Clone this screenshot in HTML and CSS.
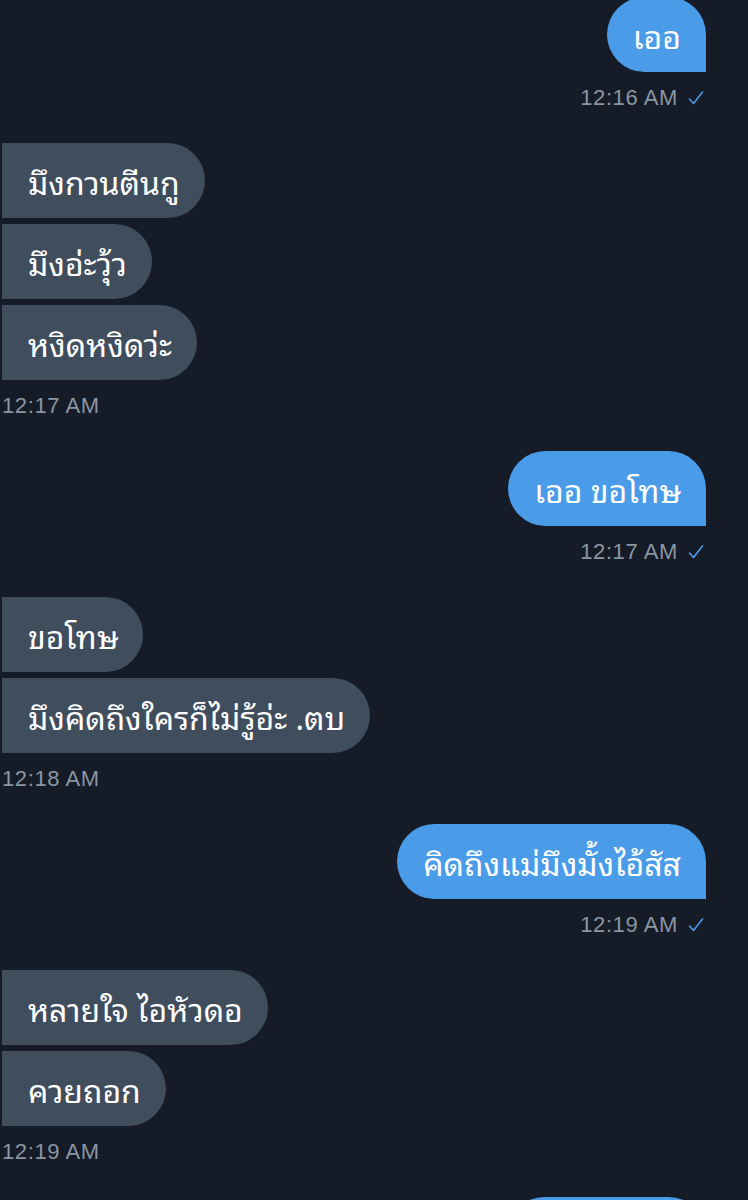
FILE: index.html
```html
<!DOCTYPE html>
<html lang="th">
<head>
<meta charset="utf-8">
<title>Messages</title>
<link rel="stylesheet" href="styles.css">
</head>
<body>
<main class="chat">
  <section class="group out first">
    <div class="bubble">เออ</div>
    <div class="time">12:16 AM <svg class="check" viewBox="0 0 16 16" width="16" height="16"><path d="M1.5 9 L5.5 13.5 L14.5 2" fill="none" stroke="currentColor" stroke-width="1.6" stroke-linecap="round" stroke-linejoin="round"/></svg></div>
  </section>
  <section class="group in">
    <div class="bubble">มึงกวนตีนกู</div>
    <div class="bubble">มึงอ่ะวุ้ว</div>
    <div class="bubble">หงิดหงิดว่ะ</div>
    <div class="time">12:17 AM</div>
  </section>
  <section class="group out">
    <div class="bubble">เออ ขอโทษ</div>
    <div class="time">12:17 AM <svg class="check" viewBox="0 0 16 16" width="16" height="16"><path d="M1.5 9 L5.5 13.5 L14.5 2" fill="none" stroke="currentColor" stroke-width="1.6" stroke-linecap="round" stroke-linejoin="round"/></svg></div>
  </section>
  <section class="group in">
    <div class="bubble">ขอโทษ</div>
    <div class="bubble">มึงคิดถึงใครก็ไม่รู้อ่ะ .ตบ</div>
    <div class="time">12:18 AM</div>
  </section>
  <section class="group out">
    <div class="bubble">คิดถึงแม่มึงมั้งไอ้สัส</div>
    <div class="time">12:19 AM <svg class="check" viewBox="0 0 16 16" width="16" height="16"><path d="M1.5 9 L5.5 13.5 L14.5 2" fill="none" stroke="currentColor" stroke-width="1.6" stroke-linecap="round" stroke-linejoin="round"/></svg></div>
  </section>
  <section class="group in">
    <div class="bubble">หลายใจ ไอหัวดอ</div>
    <div class="bubble">ควยถอก</div>
    <div class="time">12:19 AM</div>
  </section>
  <section class="group out">
    <div class="bubble partial"></div>
  </section>
</main>
</body>
</html>
```

FILE: styles.css
```css
html, body {
  margin: 0;
  padding: 0;
  background: #151c27;
}
body {
  width: 748px;
  height: 1200px;
  overflow: hidden;
}
.chat {
  display: flex;
  flex-direction: column;
  gap: 33px;
  padding: 0 42px 0 2px;
  font-family: "Noto Sans Thai Looped", "Loma", "Garuda", "Norasi", "Sarabun", "Noto Sans Thai", "Noto Sans", sans-serif;
}
.group {
  display: flex;
  flex-direction: column;
  gap: 6px;
}
.group.first {
  margin-top: -3px;
}
.group.out {
  align-items: flex-end;
}
.group.in {
  align-items: flex-start;
}
.bubble {
  box-sizing: border-box;
  height: 75px;
  display: flex;
  align-items: center;
  padding: 0 25px 0 26px;
  font-size: 32px;
  color: #ffffff;
  white-space: nowrap;
}
.out .bubble {
  background: #4a9be8;
  border-radius: 38px 38px 0 38px;
}
.in .bubble {
  background: #3f4d5d;
  border-radius: 0 38px 38px 0;
}
.bubble.partial {
  width: 199px;
}
.time {
  display: flex;
  align-items: center;
  gap: 10px;
  height: 24px;
  margin-top: 8px;
  font-family: "Liberation Sans", "Inter", sans-serif;
  font-size: 22px;
  letter-spacing: 0.6px;
  color: #8a96a3;
}
.out .time {
  margin-right: 2px;
}
.check {
  color: #4a9be8;
}
```
